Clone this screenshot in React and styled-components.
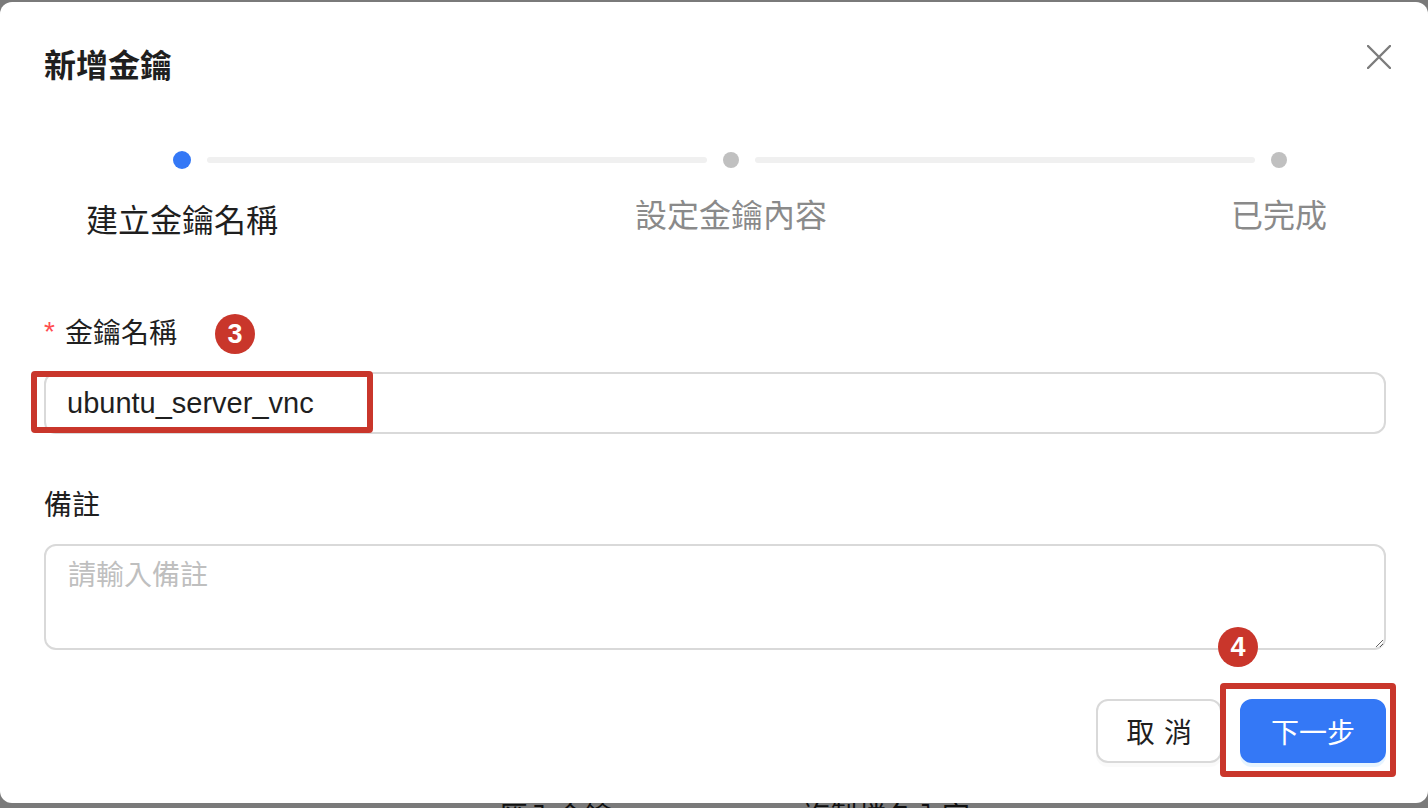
import React from 'react';
import styled, { createGlobalStyle } from 'styled-components';

const GlobalStyle = createGlobalStyle`
  html, body {
    margin: 0;
    padding: 0;
    overflow: hidden;
  }
  body {
    font-family: "Liberation Sans", "Noto Sans CJK TC", sans-serif;
  }
  * {
    box-sizing: border-box;
  }
`;

const CJK = `"Liberation Sans", "Noto Sans CJK TC", sans-serif`;
const ANNOTATION_RED = '#c9362b';
const PRIMARY = '#3478f6';

const Page = styled.div`
  position: relative;
  width: 100%;
  height: 808px;
  overflow: hidden;
  background: #ffffff;
`;

const BackPage = styled.div`
  height: 100%;
  display: flex;
  flex-direction: column;
  justify-content: flex-end;
`;

const BackRow = styled.div`
  display: flex;
  gap: 190px;
  padding-left: 500px;
  margin-bottom: -32px;
  font-family: ${CJK};
  font-size: 28px;
  line-height: 44px;
  color: #222;
`;

const Mask = styled.div`
  position: absolute;
  inset: 0;
  background: rgba(0, 0, 0, 0.52);
`;

const Modal = styled.div`
  position: absolute;
  top: 2px;
  left: 0;
  right: 0;
  bottom: 5px;
  background: #ffffff;
  border-radius: 12px;
  padding: 42px 42px 0 44px;
  font-family: ${CJK};
  color: #1f1f1f;
`;

const Header = styled.div`
  display: flex;
  justify-content: space-between;
  align-items: flex-start;
`;

const Title = styled.h2`
  margin: 0;
  font-size: 32px;
  line-height: 44px;
  font-weight: 700;
  color: #1f1f1f;
`;

const CloseButton = styled.button`
  display: flex;
  padding: 0;
  margin: 1px -5px 0 0;
  border: none;
  background: none;
  color: #7c7c7c;
  cursor: pointer;
`;

const Steps = styled.div`
  display: flex;
  align-items: flex-start;
  margin: 63px 99px 0 129px;
`;

const StepItem = styled.div`
  width: ${(p) => (p.$active ? 18 : 16)}px;
  display: flex;
  flex-direction: column;
  align-items: center;
  padding-top: ${(p) => (p.$active ? 0 : 1)}px;
`;

const Dot = styled.span`
  width: ${(p) => (p.$active ? 18 : 16)}px;
  height: ${(p) => (p.$active ? 18 : 16)}px;
  border-radius: 50%;
  background: ${(p) => (p.$active ? PRIMARY : '#c0c0c0')};
  flex-shrink: 0;
`;

const StepLabel = styled.span`
  margin-top: ${(p) => (p.$active ? 30 : 26)}px;
  white-space: nowrap;
  font-size: 32px;
  line-height: 44px;
  color: ${(p) => (p.$active ? '#1f1f1f' : '#8a8a8a')};
`;

const Connector = styled.span`
  flex: 1;
  height: 6px;
  margin: 6px 16px 0;
  border-radius: 3px;
  background: #f0f0f0;
`;

const Form = styled.div`
  margin-top: 69px;
`;

const FormItem = styled.div`
  margin-bottom: ${(p) => p.$gap}px;
`;

const FieldLabel = styled.label`
  display: flex;
  align-items: center;
  height: 44px;
  margin-bottom: 16px;
  font-size: 28px;
  line-height: 44px;
  color: #1f1f1f;
`;

const Required = styled.span`
  color: #ff4d4f;
  font-family: "Liberation Sans", sans-serif;
  font-size: 28px;
  margin-right: 10px;
  margin-top: -4px;
`;

const Badge = styled.span`
  display: inline-flex;
  align-items: center;
  justify-content: center;
  width: 40px;
  height: 40px;
  border-radius: 50%;
  background: ${ANNOTATION_RED};
  color: #ffffff;
  font-family: "Liberation Sans", sans-serif;
  font-weight: 700;
  font-size: 27px;
  line-height: 1;
  margin-left: ${(p) => p.$offset || 0}px;
`;

const FloatingBadge = styled(Badge)`
  position: absolute;
  top: 83px;
  right: 128px;
  z-index: 2;
`;

const FieldWrap = styled.div`
  position: relative;
  flex-shrink: 0;
`;

const Highlight = styled.span`
  position: absolute;
  left: ${(p) => p.$left}px;
  top: ${(p) => p.$top}px;
  width: ${(p) => p.$width}px;
  height: ${(p) => p.$height}px;
  border: 6px solid ${ANNOTATION_RED};
  border-radius: 4px;
  pointer-events: none;
  z-index: 2;
`;

const TextInput = styled.input`
  display: block;
  width: 100%;
  height: 62px;
  padding: 0 21px;
  border: 2px solid #d9d9d9;
  border-radius: 12px;
  font-family: "Liberation Sans", sans-serif;
  font-size: 29px;
  color: #1f1f1f;
  background: #ffffff;
  outline: none;
`;

const TextArea = styled.textarea`
  display: block;
  width: 100%;
  height: 106px;
  padding: 10px 22px;
  border: 2px solid #d9d9d9;
  border-radius: 12px;
  font-family: ${CJK};
  font-size: 28px;
  line-height: 40px;
  color: #1f1f1f;
  background: #ffffff;
  outline: none;
  resize: vertical;

  &::placeholder {
    color: #bfbfbf;
  }
`;

const Footer = styled.div`
  display: flex;
  justify-content: flex-end;
  gap: 18px;
`;

const Button = styled.button`
  flex-shrink: 0;
  height: 64px;
  padding: 0 ${(p) => (p.$primary ? 29 : 28)}px;
  border-radius: 12px;
  white-space: nowrap;
  font-family: ${CJK};
  font-size: 28px;
  cursor: pointer;
  border: 2px solid ${(p) => (p.$primary ? PRIMARY : '#d9d9d9')};
  background: ${(p) => (p.$primary ? PRIMARY : '#ffffff')};
  color: ${(p) => (p.$primary ? '#ffffff' : '#1f1f1f')};
  box-shadow: ${(p) =>
    p.$primary ? '0 4px 0 rgba(5, 145, 255, 0.1)' : '0 4px 0 rgba(0, 0, 0, 0.02)'};
`;

const SpacedText = styled.span`
  letter-spacing: 0.34em;
  margin-right: -0.34em;
  white-space: nowrap;
`;

const steps = ['建立金鑰名稱', '設定金鑰內容', '已完成'];

const CloseIcon = () => (
  <svg width="24" height="24" viewBox="0 0 24 24" fill="none">
    <path d="M1 1L23 23M23 1L1 23" stroke="currentColor" strokeWidth="2.4" strokeLinecap="round" />
  </svg>
);

const App = () => {
  return (
    <>
      <GlobalStyle />
      <Page>
        <BackPage>
          <BackRow>
            <span>匯入金鑰</span>
            <span>複製檔名內容</span>
          </BackRow>
        </BackPage>
        <Mask />
        <Modal>
          <Header>
            <Title>新增金鑰</Title>
            <CloseButton aria-label="close">
              <CloseIcon />
            </CloseButton>
          </Header>

          <Steps>
            {steps.map((label, index) => (
              <React.Fragment key={label}>
                {index > 0 && <Connector />}
                <StepItem $active={index === 0}>
                  <Dot $active={index === 0} />
                  <StepLabel $active={index === 0}>{label}</StepLabel>
                </StepItem>
              </React.Fragment>
            ))}
          </Steps>

          <Form>
            <FormItem $gap={50}>
              <FieldLabel>
                <Required>*</Required>
                金鑰名稱
                <Badge $offset={38}>3</Badge>
              </FieldLabel>
              <FieldWrap>
                <TextInput value="ubuntu_server_vnc" readOnly />
                <Highlight $left={-13} $top={-1} $width={342} $height={62} />
              </FieldWrap>
            </FormItem>

            <FormItem $gap={49}>
              <FieldLabel>備註</FieldLabel>
              <FieldWrap>
                <TextArea placeholder="請輸入備註" />
                <FloatingBadge>4</FloatingBadge>
              </FieldWrap>
            </FormItem>
          </Form>

          <Footer>
            <Button>
              <SpacedText>取消</SpacedText>
            </Button>
            <FieldWrap>
              <Button $primary>下一步</Button>
              <Highlight $left={-20} $top={-16} $width={176} $height={94} />
            </FieldWrap>
          </Footer>
        </Modal>
      </Page>
    </>
  );
};

export default App;
